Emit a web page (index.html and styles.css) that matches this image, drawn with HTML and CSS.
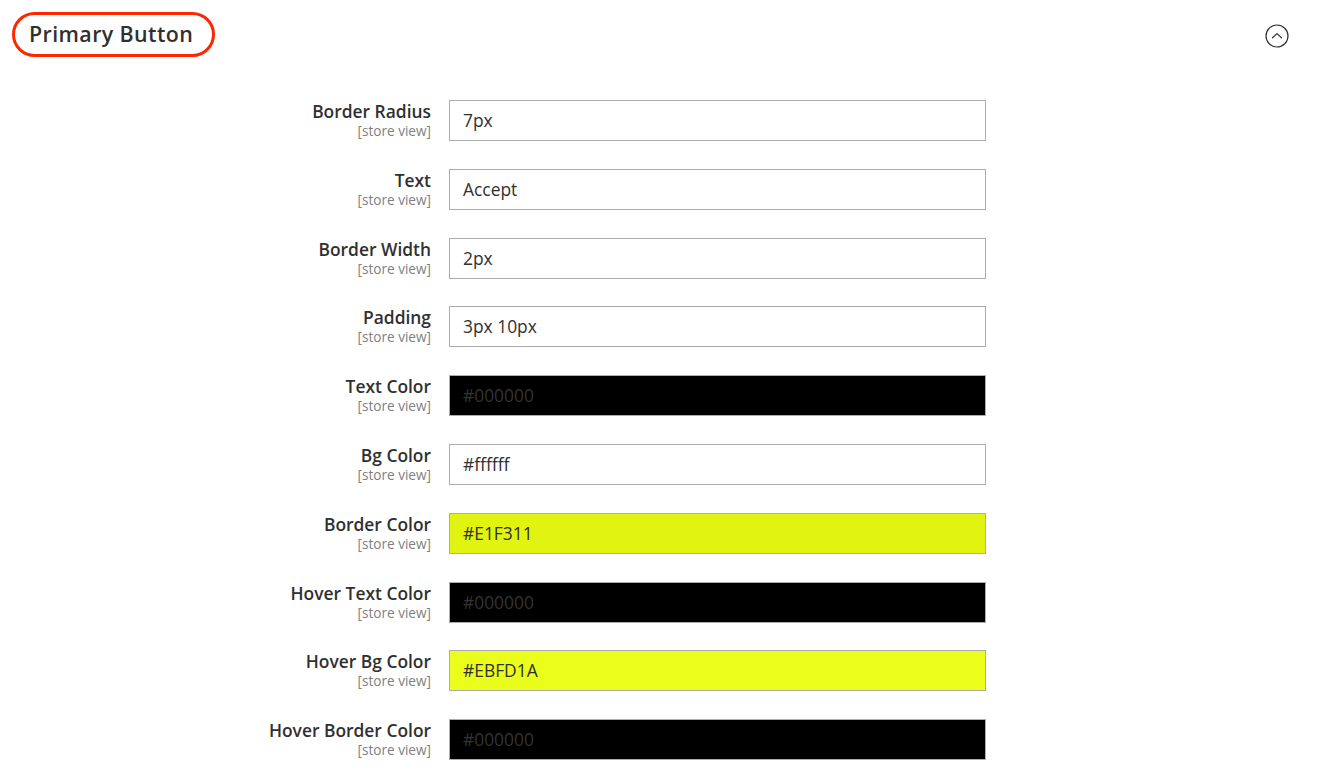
FILE: index.html
```html
<!DOCTYPE html>
<html lang="en">
<head>
<meta charset="utf-8">
<title>Primary Button</title>
<link rel="stylesheet" href="styles.css">
</head>
<body>
<section class="section">
  <header class="section-head">
    <h2 class="section-title">Primary Button</h2>
    <span class="toggle">
      <svg width="24" height="24" viewBox="0 0 24 24" fill="none" stroke="#303030" stroke-width="1.2">
        <circle cx="12" cy="12" r="11"/>
        <path d="M7.5 13.8 L12 9.6 L16.5 13.8" stroke-linecap="round" stroke-linejoin="round"/>
      </svg>
    </span>
  </header>
  <div class="form">
    <div class="row"><div class="label"><span class="name">Border Radius</span><span class="scope">[store view]</span></div><div class="field">7px</div></div>
    <div class="row"><div class="label"><span class="name">Text</span><span class="scope">[store view]</span></div><div class="field">Accept</div></div>
    <div class="row"><div class="label"><span class="name">Border Width</span><span class="scope">[store view]</span></div><div class="field">2px</div></div>
    <div class="row"><div class="label"><span class="name">Padding</span><span class="scope">[store view]</span></div><div class="field">3px 10px</div></div>
    <div class="row"><div class="label"><span class="name">Text Color</span><span class="scope">[store view]</span></div><div class="field black">#000000</div></div>
    <div class="row"><div class="label"><span class="name">Bg Color</span><span class="scope">[store view]</span></div><div class="field">#ffffff</div></div>
    <div class="row"><div class="label"><span class="name">Border Color</span><span class="scope">[store view]</span></div><div class="field yellow1">#E1F311</div></div>
    <div class="row"><div class="label"><span class="name">Hover Text Color</span><span class="scope">[store view]</span></div><div class="field black">#000000</div></div>
    <div class="row"><div class="label"><span class="name">Hover Bg Color</span><span class="scope">[store view]</span></div><div class="field yellow2">#EBFD1A</div></div>
    <div class="row"><div class="label"><span class="name">Hover Border Color</span><span class="scope">[store view]</span></div><div class="field black">#000000</div></div>
  </div>
</section>
</body>
</html>
```

FILE: styles.css
```css
html, body {
  margin: 0;
  padding: 0;
  background: #ffffff;
  font-family: "Open Sans", "Noto Sans", sans-serif;
  color: #303030;
  overflow: hidden;
}

.section {
  width: 1326px;
  height: 779px;
}

.section-head {
  display: flex;
  align-items: center;
  justify-content: space-between;
  padding: 12px 37px 0 12px;
  height: 45px;
}

.section-title {
  margin: 0;
  box-sizing: border-box;
  height: 45px;
  width: 203px;
  border: 3px solid #ff2600;
  border-radius: 23px;
  padding-left: 14px;
  font-size: 21.4px;
  font-weight: 600;
  letter-spacing: 0.4px;
  line-height: 37px;
  color: #303030;
}

.toggle {
  display: flex;
  width: 24px;
  height: 24px;
  margin-top: 3px;
}

.form {
  display: flex;
  flex-direction: column;
  gap: 27.8px;
  margin-top: 43px;
}

.row {
  display: flex;
  gap: 18px;
  height: 41px;
}

.label {
  width: 431px;
  display: flex;
  flex-direction: column;
  align-items: flex-end;
}

.name {
  font-size: 17.4px;
  font-weight: 600;
  line-height: 22px;
  color: #303030;
}

.scope {
  font-size: 13.6px;
  line-height: 17px;
  color: #808080;
}

.field {
  box-sizing: border-box;
  width: 537px;
  height: 41px;
  border: 1px solid #adadad;
  padding-left: 13px;
  font-size: 17.4px;
  line-height: 39px;
  color: #303030;
  background: #ffffff;
}

.field.black {
  background: #000000;
  color: #333333;
}

.field.yellow1 {
  background: #e1f311;
}

.field.yellow2 {
  background: #ebfd1a;
}
```
